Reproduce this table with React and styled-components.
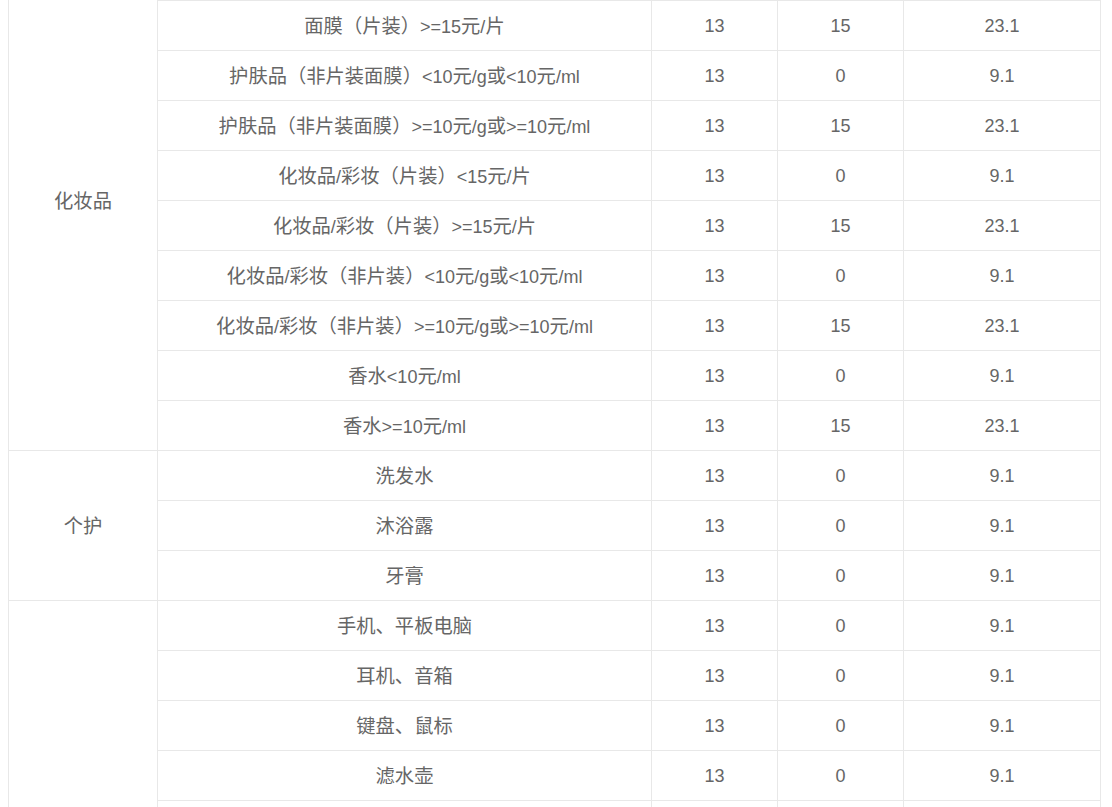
import React, { useLayoutEffect, useRef } from 'react';
import styled, { createGlobalStyle } from 'styled-components';

const GlobalStyle = createGlobalStyle`
  html, body {
    margin: 0;
    padding: 0;
    background: #fff;
  }
  body {
    font-family: "Liberation Sans", Arial, "Noto Sans CJK SC", sans-serif;
  }
`;

const Viewport = styled.div`
  height: 100vh;
  overflow: hidden;
  padding: 0 12px 0 8px;
  box-sizing: border-box;
`;

const Table = styled.table`
  width: 1092px;
  border-collapse: collapse;
  table-layout: fixed;
  color: #666;
  font-size: 18px;
`;

const Col = styled.col`
  width: ${p => p.$w}px;
`;

const Cell = styled.td`
  height: 49px;
  padding: 0;
  border: 1px solid #e8e8e8;
  text-align: center;
  vertical-align: middle;
  white-space: nowrap;
  line-height: 20px;
`;

const GroupCell = styled(Cell)`
  background: #fff;
`;

// CJK glyphs in the original render a bit larger than the latin ones
const Han = styled.span`
  font-family: "Noto Sans CJK SC", sans-serif;
  font-size: 19.3px;
`;

const CJK = /([\u3000-\u303f\u4e00-\u9fff\uff00-\uffef]+)/;

function Label({ text }) {
  return String(text)
    .split(CJK)
    .map((part, i) => (i % 2 ? <Han key={i}>{part}</Han> : part));
}

const groups = [
  {
    name: '化妆品',
    rows: [
      ['面膜（片装）<15元/片', 13, 0, 9.1],
      ['面膜（片装）>=15元/片', 13, 15, 23.1],
      ['护肤品（非片装面膜）<10元/g或<10元/ml', 13, 0, 9.1],
      ['护肤品（非片装面膜）>=10元/g或>=10元/ml', 13, 15, 23.1],
      ['化妆品/彩妆（片装）<15元/片', 13, 0, 9.1],
      ['化妆品/彩妆（片装）>=15元/片', 13, 15, 23.1],
      ['化妆品/彩妆（非片装）<10元/g或<10元/ml', 13, 0, 9.1],
      ['化妆品/彩妆（非片装）>=10元/g或>=10元/ml', 13, 15, 23.1],
      ['香水<10元/ml', 13, 0, 9.1],
      ['香水>=10元/ml', 13, 15, 23.1],
    ],
  },
  {
    name: '个护',
    rows: [
      ['洗发水', 13, 0, 9.1],
      ['沐浴露', 13, 0, 9.1],
      ['牙膏', 13, 0, 9.1],
    ],
  },
  {
    name: '家电数码',
    rows: [
      ['手机、平板电脑', 13, 0, 9.1],
      ['耳机、音箱', 13, 0, 9.1],
      ['键盘、鼠标', 13, 0, 9.1],
      ['滤水壶', 13, 0, 9.1],
      ['电动牙刷', 13, 0, 9.1],
      ['吹风机', 13, 0, 9.1],
      ['剃须刀', 13, 0, 9.1],
      ['相机', 13, 0, 9.1],
      ['智能手表', 13, 0, 9.1],
    ],
  },
];

const widths = [149, 494, 126, 126, 197];

export default function App() {
  const scroller = useRef(null);

  // page is shown scrolled down by one row
  useLayoutEffect(() => {
    if (scroller.current) scroller.current.scrollTop = 50;
  }, []);

  return (
    <>
      <GlobalStyle />
      <Viewport ref={scroller}>
        <Table>
          <colgroup>
            {widths.map((w, i) => <Col key={i} $w={w} />)}
          </colgroup>
          <tbody>
            {groups.map(g =>
              g.rows.map((r, i) => (
                <tr key={g.name + i}>
                  {i === 0 && (
                    <GroupCell rowSpan={g.rows.length}>
                      <Label text={g.name} />
                    </GroupCell>
                  )}
                  {r.map((v, j) => (
                    <Cell key={j}>
                      <Label text={v} />
                    </Cell>
                  ))}
                </tr>
              ))
            )}
          </tbody>
        </Table>
      </Viewport>
    </>
  );
}
